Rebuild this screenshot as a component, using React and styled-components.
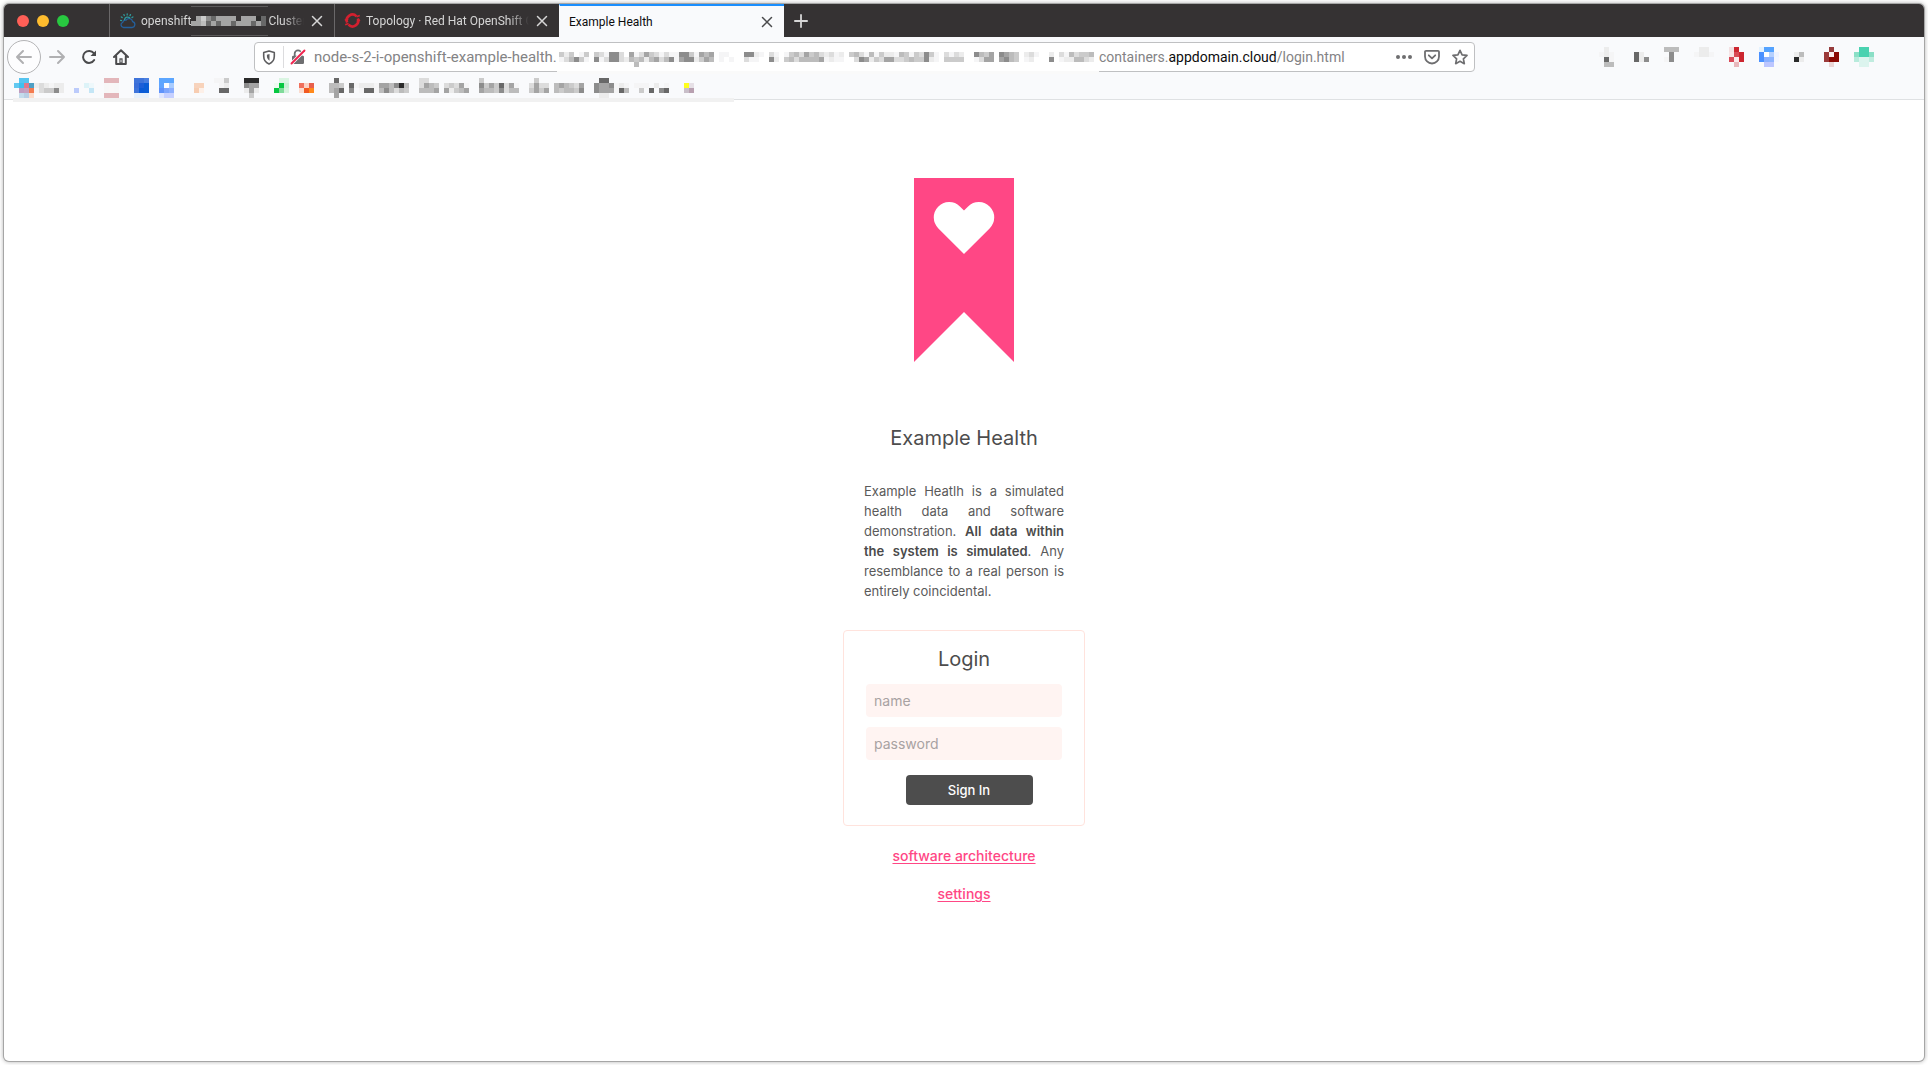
import React from "react";
import styled, { createGlobalStyle, css } from "styled-components";

const GlobalStyle = createGlobalStyle`
  *, *::before, *::after { box-sizing: border-box; }
  body { margin: 0; background: #fff; font-family: Inter, "Liberation Sans", sans-serif; }
  button, input { font: inherit; }
  button { padding: 0; border: 0; background: none; color: inherit; cursor: pointer; }
`;

/* ---------- pixelated (redacted) areas ---------- */

const GREYS = {
  1: "#f5f5f6", 2: "#ececec", 3: "#dcdcdc", 4: "#cbcbcb", 5: "#bcbcbc",
  6: "#a4a4a4", 7: "#8c8c8c", 8: "#686868", 9: "#2a2a2a",
};
const CELL = 5;

const Pixels = styled.svg`
  display: block;
  flex: none;
`;

function Mosaic({ columns, rows, shades = [], tints = [], label }) {
  const cells = [];
  shades.forEach(([start, ...lines]) => {
    lines.forEach((line, r) => {
      [...line].forEach((ch, i) => {
        if (GREYS[ch]) cells.push([start + i, r, GREYS[ch]]);
      });
    });
  });
  tints.forEach(([col, ...colors]) => {
    colors.forEach((c, r) => {
      if (c) cells.push([col, r, "#" + c]);
    });
  });
  return (
    <Pixels width={columns * CELL} height={rows * CELL} shapeRendering="crispEdges" role="img" aria-label={label}>
      {cells.map(([x, y, fill]) => (
        <rect key={x + "-" + y} x={x * CELL} y={y * CELL} width={CELL} height={CELL} fill={fill} />
      ))}
    </Pixels>
  );
}

const CLUSTER_SHADES = [[0, ".64786666.66698", "665868668666868"]];

const HOST_SHADES = [
  [0,
    "424.14.431773.6136431311774165" + "6.11...7721.31.1453645" + "3",
    "135741.71377325452563571677246" + "5.1.1..311..72.4535555" + "6",
    "...............5"],
  [53,
    "2312.453151422154143" + "741.3132..7546.7654." + "231..2.3153445",
    "1211..37624366334544" + "721.4444..1366.6754." + "12...7.1225532"],
];

const BOOKMARK_SHADES = [
  [4, "", "232122", "134472"],
  [40, "114", ".12", ".88"],
  [46, "999", "766", "262", ".4."],
  [63, ".8.", "554", "568", ".6."],
  [67, "", "812221665795", "7.1881575354"],
  [81, "33..", "3654", "5556"],
  [86, "", "34361", "62456"],
  [93, "4", "74648361", "65547355"],
  [103, ".4..", "3633", "4646"],
  [108, "", "565436", "545547"],
  [116, ".88.", "7667", "7666", ".22."],
  [120, "", "121.111.2.1", "185..4.8.78"],
];

const BOOKMARK_TINTS = [
  [0, "", "62c8f0"],
  [1, "55c4ef", "3fc0ee", "c09cc0", "c4dcec"],
  [2, "55c4ef", "e07a8c", "c7a0be", "b8cfe4"],
  [3, "", "4d9fc4", "f47b50", "fbdccc"],
  [12, "", "", "bccbfb"],
  [14, "", "ddf3f8"],
  [15, "", "eef8fb", "c4e6f6"],
  [18, "e3b6ba", "f7f7f7", "f7f7f7", "e3b6ba"],
  [19, "e3b6ba", "f9f7f7", "f9f7f7", "e3b6ba"],
  [20, "e3b6ba", "f7f7f7", "f7f7f7", "e3b6ba"],
  [24, "3f74da", "3b6ed8", "3f74da", "e6f0fb"],
  [25, "3f74da", "1d5fd8", "0b5bd6", "e6f0fb"],
  [26, "4b80e0", "0b5ed6", "0b5ed6", "e6f0fb"],
  [29, "5ca6ff", "5fa4ff", "5f93fb", "dfe6ff"],
  [30, "5ca6ff", "fafcff", "7ea6fd", "c6d0ff"],
  [31, "5ca6ff", "a9ccff", "8cb0ff", "c6d0ff"],
  [36, "", "f7d3bd", "f7cdb2"],
  [37, "", "f8d3bb", "fdf0e8"],
  [52, "", "eefaf1", "07c741"],
  [53, "daf5e2", "07c741", "7fdb9a"],
  [54, "daf5e2", "c8f0d4", "d6f3de"],
  [57, "", "f0705c", "fbdccf"],
  [58, "", "fbd2c4", "f15a22"],
  [59, "", "e8604c", "ff8a1c"],
  [134, "", "ffff1e", "c9bfc9"],
  [135, "", "e6e0e6", "b8a0b0"],
];

const EXTENSION_SHADES = [
  [0, ".2.", "121", ".81", ".55"],
  [7, "", "82.", "827"],
  [13, "555", ".7.", "17."],
  [19, ".22.", "1221"],
  [39, "", "25", "92"],
];

const EXTENSION_TINTS = [
  [26, "f3e0e2", "f7e4e6", "d84a58"],
  [27, "cc2630", "d84a55", "fbeaec", "e8b8bc"],
  [28, "", "cc2630", "cc2630"],
  [32, "e4f2ff", "4a90ff", "4a90ff"],
  [33, "55a3ff", "ffffff", "8ab0ff", "bcc6ff"],
  [34, "55a3ff", "b5d0ff", "8cb4ff", "bcc6ff"],
  [35, "", "eef3ff", "f3f6ff"],
  [45, "", "9c3a3a", "9c3a3a"],
  [46, "963c3c", "fbeeee", "8b0a04", "ecd6d6"],
  [47, "", "8b0a04", "8b0a04"],
  [51, "", "8adfc6", "b8ebdc"],
  [52, "4ad2b0", "4ad2b0", "dcf4ee", "dcf4ee"],
  [53, "4ad2b0", "4ad2b0", "dcf4ee", "dcf4ee"],
  [54, "", "8adfc6", "c0ecdf"],
];

/* ---------- browser frame ---------- */

const Desktop = styled.div`
  min-height: 100vh;
  display: flex;
  padding: 4px;
`;

const Window = styled.div`
  flex: 1;
  min-width: 0;
  display: flex;
  flex-direction: column;
  border-radius: 5px;
  background: #fff;
  box-shadow: 0 0 0 1px #a6a6a6, 0 0 4px 1px rgba(0, 0, 0, 0.3);
`;

const TabBar = styled.div`
  display: flex;
  height: 33px;
  border-radius: 5px 5px 0 0;
  background: #353233;
  color: #d6d6d6;
  font-family: Roboto, "Liberation Sans", sans-serif;
`;

const WindowButtons = styled.div`
  display: flex;
  align-items: center;
  gap: 8px;
  width: 105px;
  padding-left: 13px;
`;

const Light = styled.button`
  width: 12px;
  height: 12px;
  border-radius: 50%;
  background: ${(p) => p.$color};
`;

const Tab = styled.div`
  display: flex;
  align-items: center;
  gap: 5px;
  width: 225px;
  padding: 0 9px;
  border-left: 1px solid #6a6869;
  font-size: 12px;
  ${(p) =>
    p.$active &&
    css`
      background: #f9fafc;
      border-left-color: #f9fafc;
      border-top: 2px solid #1a8fff;
      color: #0c0c0d;
    `}
`;

const TabTitle = styled.button`
  display: flex;
  align-items: center;
  flex: 1;
  min-width: 0;
  height: 33px;
  white-space: nowrap;
  text-align: left;
  ${(p) => p.$active && css`height: 31px;`}
  ${(p) => p.$fade && css`mask-image: linear-gradient(to left, transparent, #000 20px);`}
`;

const Redacted = styled.span`
  display: flex;
  align-items: center;
  flex: none;
  width: 77px;
  height: 30px;
  border-top: 1px solid #5c5a5b;
  border-bottom: 1px solid #5c5a5b;
`;

const IconButton = styled.button`
  flex: none;
  display: grid;
  place-items: center;
  width: ${(p) => p.$size || 16}px;
  height: ${(p) => p.$size || 16}px;
  color: ${(p) => p.$color || "inherit"};
  ${(p) => p.$ring && css`border: 1px solid #b4b4b6; border-radius: 50%; background: #fdfdfe;`}
`;

const NewTab = styled(IconButton)`
  width: 34px;
  height: 33px;
`;

const Toolbars = styled.div`
  background: #f9fafc;
  border-bottom: 1px solid #dfe1e3;
`;

const NavBar = styled.div`
  display: flex;
  align-items: center;
  height: 40px;
  padding: 0 45px 0 3px;
`;

const NavButtons = styled.div`
  display: flex;
  align-items: center;
  width: 247px;
`;

const AddressBar = styled.div`
  flex: 1;
  min-width: 0;
  display: flex;
  align-items: center;
  height: 30px;
  margin-right: 124px;
  padding: 0 6px 0 7px;
  border: 1px solid #bfc0c2;
  border-radius: 4px;
  background: #fff;
`;

const Shield = styled(IconButton)`
  width: 22px;
  height: 22px;
  border-right: 1px solid #dcdcde;
  padding-right: 7px;
`;

const Url = styled.div`
  flex: 1;
  min-width: 0;
  display: flex;
  align-items: center;
  padding-left: 2px;
  font-family: Roboto, "Liberation Sans", sans-serif;
  font-size: 14px;
  line-height: 20px;
  color: #838385;
  white-space: nowrap;
  b { font-weight: 400; color: #0c0c0d; }
`;

const HostStart = styled.span`
  flex: none;
  width: 243px;
  font-size: 15px;
`;

const HostRedacted = styled.span`
  position: relative;
  display: block;
  flex: none;
  width: 542px;
  height: 20px;
  padding: 5px 0 0 2px;
  &::before {
    content: "";
    position: absolute;
    inset: 0 0 -7px;
    background: #fff;
    border-bottom: 3px solid #fafafa;
  }
  svg { position: relative; }
`;

const PageActions = styled.div`
  display: flex;
  gap: 12px;
  color: #6e6e70;
`;

const Bookmarks = styled.div`
  height: 22px;
  padding: 1px 0 0 10px;
  position: relative;
  &::after {
    content: "";
    position: absolute;
    left: 9px;
    bottom: -3px;
    width: 721px;
    height: 4px;
    background: #f1f1f1;
  }
`;

/* ---------- page ---------- */

const Page = styled.main`
  display: flex;
  flex-direction: column;
  align-items: center;
  padding: 78px 16px 40px;
  color: #4d4d4d;
  font-size: 14px;
  line-height: 20px;
`;

const Title = styled.h1`
  margin: 0;
  padding: 63px 0 30px;
  font-size: 20px;
  line-height: 26px;
  font-weight: 400;
`;

const Intro = styled.p`
  width: 200px;
  margin: 0 0 29px;
  font-size: 13px;
  text-align: justify;
  color: #5a5a5a;
  strong { font-weight: 600; color: #4a4a4a; }
`;

const LoginCard = styled.form`
  display: flex;
  flex-direction: column;
  width: 242px;
  padding: 15px 22px 20px;
  border: 1px solid #ffe3dd;
  border-radius: 4px;
`;

const CardTitle = styled.h2`
  margin: 0 0 12px;
  font-size: 20px;
  line-height: 26px;
  font-weight: 400;
  text-align: center;
`;

const Field = styled.input`
  width: 100%;
  height: 33px;
  margin-bottom: ${(p) => (p.$last ? 15 : 10)}px;
  padding: 0 8px;
  border: 0;
  border-radius: 4px;
  background: #fff4f2;
  color: #4d4d4d;
  font-size: 14px;
  &::placeholder { color: #a8a2a2; opacity: 1; }
`;

const SignIn = styled.button`
  align-self: center;
  width: 127px;
  height: 30px;
  margin-left: 10px;
  border-radius: 4px;
  background: #4d4d4d;
  color: #fff;
  font-size: 13px;
  font-weight: 500;
`;

const Links = styled.nav`
  display: flex;
  flex-direction: column;
  align-items: center;
  gap: 18px;
  padding-top: 20px;
`;

const PinkLink = styled.a`
  color: #ff4785;
  font-size: 14px;
  font-weight: 500;
  text-decoration: underline;
  text-underline-offset: 2px;
`;

/* ---------- drawings ---------- */

const Close = () => (
  <svg width="12" height="12" viewBox="0 0 12 12" stroke="currentColor" strokeWidth="1.5" strokeLinecap="round">
    <path d="M1.5 1.5l9 9M10.500 1.5l-9 9" />
  </svg>
);

const CloudIcon = () => (
  <svg width="17" height="16" viewBox="0 0 17 16" fill="none" strokeWidth="1.3" strokeLinecap="round">
    <path d="M4.500 14.500h8.500a3 3 0 0 0 .6-5.900 3.600 3.600 0 0 0-6.500-1.500 3 3 0 0 0-3.400 2.200 2.700 2.700 0 0 0 .8 5.200z" stroke="#24609c" />
    <path d="M5.500 6.600a3.200 3.200 0 0 1 5.300-1.700M2.600 7.600l-1-.3M3.200 4.600l-.9-.7M5.300 2.600l-.4-1M8.200 1.900V.8M11 2.600l.5-1M13 4.600l.9-.7" stroke="#2f9a9c" />
  </svg>
);

const OpenShiftIcon = () => (
  <svg width="17" height="17" viewBox="0 0 17 17" fill="none" stroke="#d3202f">
    <path d="M3.200 10.500A5.700 5.700 0 0 1 12.500 4.300" strokeWidth="2.600" />
    <path d="M13.800 6.500A5.700 5.700 0 0 1 4.500 12.700" strokeWidth="2.600" />
    <path d="M.8 8.200l3.400-1.300M12.500 4.800l3.300-1.400M1.200 12.800l3.400-1.300M12.700 9.400l3.400-1.300" strokeWidth="1.600" />
  </svg>
);

const Arrow = ({ flip }) => (
  <svg width="18" height="16" viewBox="0 0 18 16" fill="none" stroke="currentColor" strokeWidth="2" strokeLinecap="round" strokeLinejoin="round">
    <path d={flip ? "M2 8h14M10 2l6 6-6 6" : "M16 8H2M8 2L2 8l6 6"} />
  </svg>
);

const Reload = () => (
  <svg width="16" height="16" viewBox="0 0 16 16" fill="none" stroke="currentColor" strokeWidth="2" strokeLinecap="round">
    <path d="M13.200 11A6 6 0 1 1 12.800 4.200L14 5.500" />
    <path d="M15 1.500V7H9.500z" fill="currentColor" stroke="none" />
  </svg>
);

const Home = () => (
  <svg width="16" height="16" viewBox="0 0 16 16" fill="none" stroke="currentColor" strokeWidth="2" strokeLinecap="round" strokeLinejoin="round">
    <path d="M1 8l7-6.800L15 8M3.200 7.500V15h9.600V7.500" />
    <path d="M6.400 9.300h3.200V15H6.400z" fill="currentColor" stroke="none" />
    <path d="M8 11v2" stroke="#f9fafc" strokeWidth="1" />
  </svg>
);

const ShieldIcon = () => (
  <svg width="14" height="15" viewBox="0 0 14 15" fill="none" stroke="currentColor" strokeWidth="1.600" strokeLinejoin="round">
    <path d="M7 1l5.300 1.600v3.600c0 3.500-1.800 6.200-5.300 7.700-3.500-1.500-5.300-4.200-5.300-7.700V2.600z" />
    <path d="M7.500 4v6.800C5.900 9.700 4.900 8 4.900 6V4.700z" fill="currentColor" stroke="none" />
  </svg>
);

const LockIcon = () => (
  <svg width="16" height="16" viewBox="0 0 16 16" fill="none">
    <path d="M4.700 7V4.600a3.300 3.300 0 0 1 6.600 0V7" stroke="#6e6e70" strokeWidth="1.800" />
    <rect x="2" y="6.800" width="12" height="8.200" rx="1.200" fill="#6e6e70" />
    <path d="M1.500 14.500L14.500 1.500" stroke="#fff" strokeWidth="3.400" />
    <path d="M1.500 14.500L14.500 1.500" stroke="#f0244f" strokeWidth="1.900" strokeLinecap="round" />
  </svg>
);

const Dots = () => (
  <svg width="16" height="16" viewBox="0 0 16 16" fill="currentColor">
    <circle cx="2" cy="8" r="2" /><circle cx="8" cy="8" r="2" /><circle cx="14" cy="8" r="2" />
  </svg>
);

const Pocket = () => (
  <svg width="16" height="16" viewBox="0 0 16 16" fill="none" stroke="currentColor" strokeWidth="1.800" strokeLinecap="round" strokeLinejoin="round">
    <path d="M2 1.800h12a1 1 0 0 1 1 1v4.700a7 7 0 0 1-14 0V2.800a1 1 0 0 1 1-1z" />
    <path d="M4.800 6.300L8 9.300l3.200-3" />
  </svg>
);

const Star = () => (
  <svg width="16" height="16" viewBox="0 0 16 16" fill="none" stroke="currentColor" strokeWidth="1.700" strokeLinejoin="round">
    <path d="M8 1.300l2.100 4.500 4.900.6-3.600 3.400.9 4.900L8 12.300l-4.300 2.400.9-4.900L1 6.400l4.900-.6z" />
  </svg>
);

const Ribbon = () => (
  <svg width="100" height="184" viewBox="0 0 100 184" role="img" aria-label="Example Health logo">
    <path d="M0 0h100v184L50 134 0 184z" fill="#ff4785" />
    <path d="M50 76L24.400 50.400A15.200 15.200 0 0 1 45.900 28.400L50 32.500l4.100-4.100A15.200 15.200 0 0 1 75.600 50.400z" fill="#fff" />
  </svg>
);

export default function App() {
  return (
    <Desktop>
      <GlobalStyle />
      <Window>
        <TabBar>
          <WindowButtons>
            <Light $color="#ff5f57" aria-label="Close window" />
            <Light $color="#febc2e" aria-label="Minimize window" />
            <Light $color="#28c840" aria-label="Zoom window" />
          </WindowButtons>
          <Tab>
            <CloudIcon />
            <TabTitle $fade>
              openshift
              <Redacted>
                <Mosaic columns={15} rows={2} label="Hidden cluster name" shades={CLUSTER_SHADES} />
              </Redacted>
              Cluster
            </TabTitle>
            <IconButton aria-label="Close tab"><Close /></IconButton>
          </Tab>
          <Tab>
            <OpenShiftIcon />
            <TabTitle $fade>Topology · Red Hat OpenShift C</TabTitle>
            <IconButton aria-label="Close tab"><Close /></IconButton>
          </Tab>
          <Tab $active>
            <TabTitle $active>Example Health</TabTitle>
            <IconButton $color="#4a4a4c" aria-label="Close tab"><Close /></IconButton>
          </Tab>
          <NewTab aria-label="New tab">
            <svg width="14" height="14" viewBox="0 0 14 14" stroke="currentColor" strokeWidth="1.800" strokeLinecap="round">
              <path d="M7 .9v12.200M.9 7h12.200" />
            </svg>
          </NewTab>
        </TabBar>

        <Toolbars>
          <NavBar>
            <NavButtons>
              <IconButton $size={34} $ring $color="#b0b0b2" aria-label="Back"><Arrow /></IconButton>
              <IconButton $size={32} $color="#b0b0b2" aria-label="Forward"><Arrow flip /></IconButton>
              <IconButton $size={32} $color="#4a4a4c" aria-label="Reload"><Reload /></IconButton>
              <IconButton $size={32} $color="#4a4a4c" aria-label="Home"><Home /></IconButton>
            </NavButtons>
            <AddressBar>
              <Shield $color="#5e5e60" aria-label="Tracking protection"><ShieldIcon /></Shield>
              <IconButton $size={28} aria-label="Connection not secure"><LockIcon /></IconButton>
              <Url role="textbox" aria-label="Address" tabIndex={0}>
                <HostStart>node-s-2-i-openshift-example-health.</HostStart>
                <HostRedacted>
                  <Mosaic columns={107} rows={3} shades={HOST_SHADES} label="Hidden host name" />
                </HostRedacted>
                <span>containers.<b>appdomain.cloud</b>/login.html</span>
              </Url>
              <PageActions>
                <IconButton aria-label="Page actions"><Dots /></IconButton>
                <IconButton aria-label="Save to Pocket"><Pocket /></IconButton>
                <IconButton aria-label="Bookmark this page"><Star /></IconButton>
              </PageActions>
            </AddressBar>
            <Mosaic columns={56} rows={4} shades={EXTENSION_SHADES} tints={EXTENSION_TINTS} label="Hidden extensions" />
          </NavBar>
          <Bookmarks>
            <Mosaic columns={136} rows={4} shades={BOOKMARK_SHADES} tints={BOOKMARK_TINTS} label="Hidden bookmarks" />
          </Bookmarks>
        </Toolbars>

        <Page>
          <Ribbon />
          <Title>Example Health</Title>
          <Intro>
            Example Heatlh is a simulated health data and software demonstration.{" "}
            <strong>All data within the system is simulated</strong>. Any resemblance to a real person is entirely
            coincidental.
          </Intro>
          <LoginCard onSubmit={(e) => e.preventDefault()}>
            <CardTitle>Login</CardTitle>
            <Field type="text" placeholder="name" aria-label="name" />
            <Field type="password" placeholder="password" aria-label="password" $last />
            <SignIn type="submit">Sign In</SignIn>
          </LoginCard>
          <Links>
            <PinkLink href="#architecture">software architecture</PinkLink>
            <PinkLink href="#settings">settings</PinkLink>
          </Links>
        </Page>
      </Window>
    </Desktop>
  );
}
